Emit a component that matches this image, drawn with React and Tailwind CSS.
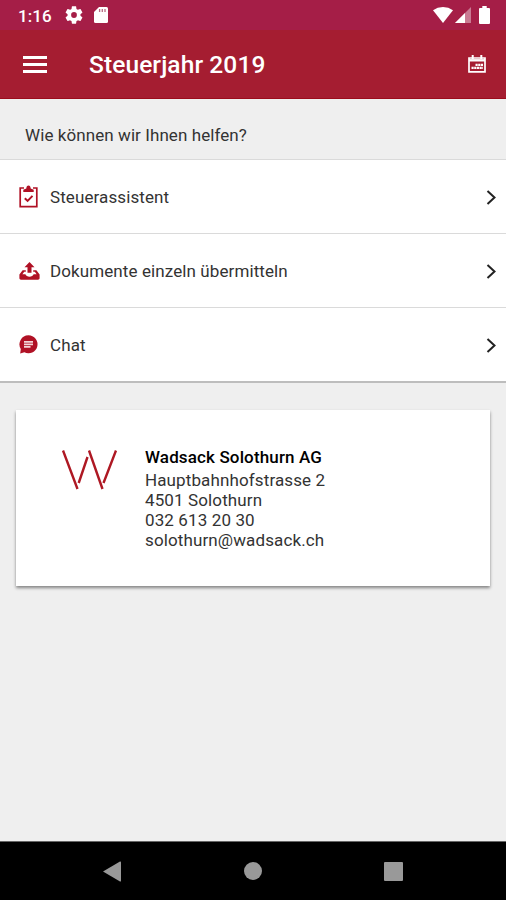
import React from "react";

const ClipboardIcon = () => (
  <svg width="19" height="23" viewBox="0 0 19 23" fill="none">
    <path d="M5 3H1.200v18.600h16.600V3H14" stroke="#b01125" strokeWidth="1.700" />
    <path d="M4.300 7V4.800l3-1.400C7.400 1.400 8.200.4 9.500.4s2.100 1 2.200 3l3 1.400V7z" fill="#b01125" />
    <path d="M5.800 13.200l2.800 2.700 4.900-5" stroke="#b01125" strokeWidth="2" />
  </svg>
);

const UploadIcon = () => (
  <svg width="21" height="18" viewBox="0 0 21 18" fill="#b01125">
    <path d="M10.500 0l5 5.200h-3v5.600h-4V5.200h-3z" />
    <path d="M3.600 8.200h3.200v1.500H5.200L3.400 12.200h3c.5 1.600 2.200 2.500 4.100 2.500s3.600-.9 4.100-2.500h3l-1.800-2.500h-1.600V8.200h3.200l3.200 4.400V16c0 1-.6 1.700-1.600 1.700H2c-1 0-1.600-.7-1.600-1.700v-3.400z" />
  </svg>
);

const ChatIcon = () => (
  <svg width="19" height="19" viewBox="0 0 19 19">
    <path d="M9.500.3a9 9 0 1 1-4.100 17L1.200 18.600l.6-4.600A9 9 0 0 1 9.500.3z" fill="#b01125" />
    <path d="M5 6.900h9M5 9.400h9M5 11.900h6.500" stroke="#f3d5d8" strokeWidth="1.700" />
  </svg>
);

const menuItems = [
  { label: "Steuerassistent", icon: <ClipboardIcon /> },
  { label: "Dokumente einzeln übermitteln", icon: <UploadIcon /> },
  { label: "Chat", icon: <ChatIcon /> },
];

const StatusBar = () => (
  <div className="flex h-[30px] items-center bg-[#a51e47] pl-[18px] pr-[16px] text-white">
    <span className="w-[47px] pt-[2px] text-[17px] font-medium leading-none tracking-[0.1px]">1:16</span>
    <svg width="18" height="18" viewBox="2 2 20 20" fill="currentColor">
      <path d="M19.14 12.94c.04-.3.06-.61.06-.94 0-.32-.02-.64-.07-.94l2.03-1.58c.18-.14.23-.41.12-.61l-1.92-3.32c-.12-.22-.37-.29-.59-.22l-2.39.96c-.5-.38-1.03-.7-1.62-.94l-.36-2.54c-.04-.24-.24-.41-.48-.41h-3.84c-.24 0-.43.17-.47.41l-.36 2.54c-.59.24-1.13.57-1.62.94l-2.39-.96c-.22-.08-.47 0-.59.22L2.74 8.87c-.12.21-.08.47.12.61l2.03 1.58c-.05.3-.09.63-.09.94s.02.64.07.94l-2.03 1.58c-.18.14-.23.41-.12.61l1.92 3.32c.12.22.37.29.59.22l2.39-.96c.5.38 1.03.7 1.62.94l.36 2.54c.05.24.24.41.48.41h3.84c.24 0 .44-.17.47-.41l.36-2.54c.59-.24 1.13-.56 1.62-.94l2.39.96c.22.08.47 0 .59-.22l1.92-3.32c.12-.22.07-.47-.12-.61l-2.01-1.58zM12 15.2a3.2 3.2 0 1 1 0-6.400 3.200 3.200 0 0 1 0 6.400z" />
    </svg>
    <svg className="ml-[11px]" width="14" height="16" viewBox="0 0 14 16">
      <path d="M5 0h7.500Q14 0 14 1.500v13q0 1.500-1.500 1.500h-11Q0 16 0 14.500V5z" fill="#fff" />
      <path d="M5.600 2v3M8.300 2v3M11 2v3" stroke="#b76a83" strokeWidth="1.300" />
    </svg>
    <svg className="ml-auto" width="20" height="16" viewBox="0 0 20 16" fill="currentColor">
      <path d="M0 3.200Q4.500 0 10 0t10 3.200L10 16z" />
    </svg>
    <svg className="ml-[2px]" width="16" height="16" viewBox="0 0 16 16">
      <path d="M16 0v16H0z" fill="#c97a93" />
      <path d="M10 6v10H0z" fill="#fff" />
    </svg>
    <svg className="ml-[8px]" width="11" height="18" viewBox="0 0 11 18" fill="currentColor">
      <path d="M3.300 0h4.400v2H10q1 0 1 1v14q0 1-1 1H1q-1 0-1-1V3q0-1 1-1h2.300z" />
    </svg>
  </div>
);

const Header = () => (
  <header className="flex h-[69px] items-center border-b border-[#9b0c1c] bg-[#a51d31] pl-[23px] pr-[20px] text-white">
    <div className="flex w-[66px] flex-col gap-[4px]">
      <span className="h-[3px] w-[24px] bg-white" />
      <span className="h-[3px] w-[24px] bg-white" />
      <span className="h-[3px] w-[24px] bg-white" />
    </div>
    <h1 className="pt-[3px] text-[24.500px] font-medium leading-none tracking-[0.1px]">Steuerjahr 2019</h1>
    <svg className="ml-auto" width="18" height="18" viewBox="0 0 18 18" fill="none" stroke="#fff">
      <path d="M1 3h16v13.800H1z" strokeWidth="1.700" />
      <path d="M1 5.300h16" strokeWidth="2.400" />
      <path d="M4.700 0v4M13.300 0v4" strokeWidth="2" />
      <path d="M7.500 9.800h7.500M3.500 12.800h11.500" strokeWidth="2.200" strokeDasharray="2.200 .5" />
    </svg>
  </header>
);

const MenuRow = ({ item }) => (
  <div className="flex h-[74px] items-center border-t border-[#dadada] bg-white pr-[9px]">
    <span className="flex w-[50px] items-center pl-[19px]">{item.icon}</span>
    <span className="pt-[2px] text-[17px] tracking-[0.1px]">{item.label}</span>
    <svg className="ml-auto mt-[2px]" width="11" height="15" viewBox="0 0 11 15" fill="none">
      <path d="M1.500 1l7 6.500-7 6.500" stroke="#222" strokeWidth="2" />
    </svg>
  </div>
);

const ContactCard = () => (
  <section className="mx-4 mt-[27px] flex h-[176px] bg-white pl-[46px] pt-[37px] shadow-[0_2px_3px_rgba(0,0,0,0.450)]">
    <svg className="mt-[3px]" width="55" height="40" viewBox="0 0 55 40" fill="none" stroke="#ae1823" strokeWidth="2.400">
      <path d="M1 .5l14.500 38.500M27 .5l13.500 38.500M54 .5L41.500 33M25.500 7L16.700 33" />
    </svg>
    <div className="ml-[28px] text-[17px] leading-[20px] tracking-[0.120px]">
      <p className="mb-[3px] font-medium tracking-[0.140px] text-black">Wadsack Solothurn AG</p>
      <p>Hauptbahnhofstrasse 2</p>
      <p>4501 Solothurn</p>
      <p>032 613 20 30</p>
      <p>solothurn@wadsack.ch</p>
    </div>
  </section>
);

const NavigationBar = () => (
  <nav className="mt-auto flex h-[59px] items-center border-t border-[#666] bg-black pl-[103px] pr-[103px]">
    <svg width="18" height="21" viewBox="0 0 18 21" fill="#999">
      <path d="M0 10.500L17 .5q1-.3 1 .8v18.400q0 1.100-1 .8z" />
    </svg>
    <span className="ml-[123px] h-[18px] w-[18px] rounded-full bg-[#999]" />
    <span className="ml-auto h-[19px] w-[19px] rounded-[1px] bg-[#999]" />
  </nav>
);

const App = () => {
  return (
    <div className="flex h-[900px] w-[506px] flex-col overflow-hidden bg-[#efefef] font-['Roboto',sans-serif] text-[#333]">
      <StatusBar />
      <Header />
      <p className="h-[60px] pl-[25px] pt-[23px] text-[17px] leading-[26px] tracking-[0.080px]">
        Wie können wir Ihnen helfen?
      </p>
      <div className="border-b-2 border-[#bdbdbd]">
        {menuItems.map((item) => (
          <MenuRow key={item.label} item={item} />
        ))}
      </div>
      <ContactCard />
      <NavigationBar />
    </div>
  );
};

export default App;
